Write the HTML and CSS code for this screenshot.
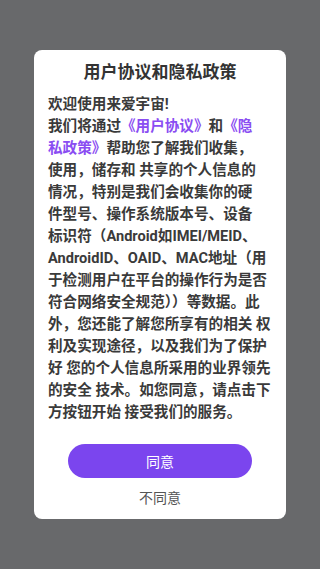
FILE: index.html
```html
<!DOCTYPE html>
<html lang="zh-CN">
<head>
    <meta charset="UTF-8">
    <meta name="viewport" content="width=device-width, initial-scale=1.0">
    <title>用户协议和隐私政策</title>
    <link rel="stylesheet" href="styles.css">
</head>
<body>
    <div class="dialog">
        <h1 class="title">用户协议和隐私政策</h1>
        <div class="content">
            <p class="line">欢迎使用来爱宇宙!</p>
            <p class="line">我们将通过<a class="link" href="#">《用户协议》</a>和<a class="link" href="#">《隐</a></p>
            <p class="line"><a class="link" href="#">私政策》</a>帮助您了解我们收集，</p>
            <p class="line">使用，储存和 共享的个人信息的</p>
            <p class="line">情况，特别是我们会收集你的硬</p>
            <p class="line">件型号、操作系统版本号、设备</p>
            <p class="line">标识符（Android如IMEI/MEID、</p>
            <p class="line">AndroidID、OAID、MAC地址（用</p>
            <p class="line">于检测用户在平台的操作行为是否</p>
            <p class="line">符合网络安全规范））等数据。此</p>
            <p class="line">外，您还能了解您所享有的相关 权</p>
            <p class="line">利及实现途径，以及我们为了保护</p>
            <p class="line">好 您的个人信息所采用的业界领先</p>
            <p class="line">的安全 技术。如您同意，请点击下</p>
            <p class="line">方按钮开始 接受我们的服务。</p>
        </div>
        <div class="buttons">
            <button class="agree-btn">同意</button>
            <button class="refuse-btn">不同意</button>
        </div>
    </div>
</body>
</html>
```

FILE: styles.css
```css
body {
    margin: 0;
    background-color: #68696b;
    font-family: Roboto, "Noto Sans CJK SC", sans-serif;
    min-height: 569px;
}
.dialog {
    width: 252px;
    margin: 50px auto 0;
    background-color: white;
    border-radius: 8px;
    padding: 10px 0 11px;
    box-sizing: border-box;
}
.title {
    margin: 0;
    font-size: 17px;
    line-height: 24px;
    font-weight: bold;
    color: #333;
    text-align: center;
}
.content {
    margin: 9px 14px 0;
    font-size: 14.6px;
    line-height: 22px;
    font-weight: bold;
    color: #3a3a3a;
    text-align: left;
}
.line {
    margin: 0;
    white-space: nowrap;
}
.link {
    color: #8a4df2;
    text-decoration: none;
}
.buttons {
    display: flex;
    flex-direction: column;
    align-items: center;
    margin-top: 21px;
}
.agree-btn {
    width: 184px;
    height: 34px;
    border: none;
    border-radius: 17px;
    background-color: #7b45ee;
    color: white;
    font-family: inherit;
    font-size: 14px;
    cursor: pointer;
}
.refuse-btn {
    margin-top: 10px;
    border: none;
    background: none;
    padding: 0;
    color: #555;
    font-family: inherit;
    font-size: 14px;
    line-height: 20px;
    cursor: pointer;
}
```
